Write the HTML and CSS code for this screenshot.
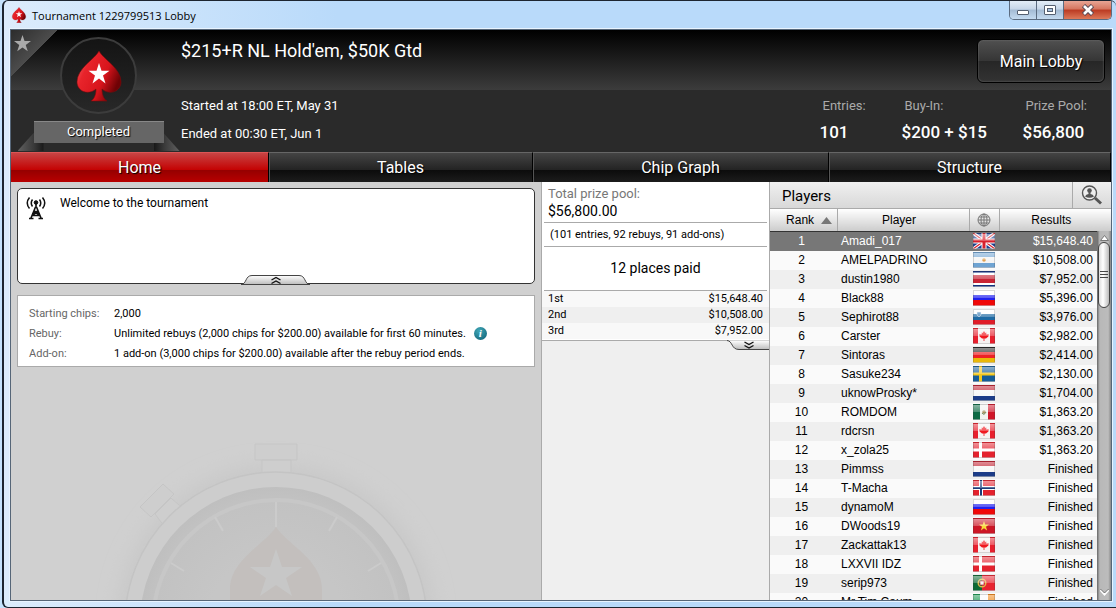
FILE: index.html
```html
<!DOCTYPE html>
<html lang="en">
<head>
    <meta charset="UTF-8">
    <meta name="viewport" content="width=device-width, initial-scale=1.0">
    <title>Tournament 1229799513 Lobby</title>
    <link rel="stylesheet" href="styles.css">
</head>
<body>
    <!-- Shared shapes: logo, star and flags -->
    <svg class="defs" width="0" height="0" aria-hidden="true">
        <defs>
            <linearGradient id="spadeFill" x1="0" y1="0" x2="1" y2="0.5">
                <stop offset="0" stop-color="#f8787a"/>
                <stop offset="0.3" stop-color="#e8242b"/>
                <stop offset="0.7" stop-color="#d8141c"/>
                <stop offset="1" stop-color="#6e0205"/>
            </linearGradient>
            <symbol id="star" viewBox="0 0 20 20">
                <path d="M10 0 L12.4 7.2 H20 L13.8 11.8 L16.2 19.2 L10 14.7 L3.8 19.2 L6.2 11.8 L0 7.2 H7.6 Z"/>
            </symbol>
            <symbol id="spade" viewBox="0 0 46 52">
                <path fill="url(#spadeFill)" stroke="#7a0a0c" stroke-width="0.6" d="M23 1 C27 9 45 18 45 32 C45 41 34 46 26 39 C26 45 28 49 31 51 H15 C18 49 20 45 20 39 C12 46 1 41 1 32 C1 18 19 9 23 1 Z"/>
                <path fill="#fff" d="M23 13 L25.5 20.7 H33.5 L27 25.5 L29.5 33.5 L23 28.6 L16.5 33.5 L19 25.5 L12.5 20.7 H20.5 Z"/>
            </symbol>

            <symbol id="gb" viewBox="0 0 22 16">
                <rect width="22" height="16" fill="#1c3f8f"/>
                <path d="M0 0 L22 16 M22 0 L0 16" stroke="#fff" stroke-width="3.4"/>
                <path d="M0 0 L22 16 M22 0 L0 16" stroke="#d8202c" stroke-width="1.2"/>
                <path d="M11 0 V16 M0 8 H22" stroke="#fff" stroke-width="5"/>
                <path d="M11 0 V16 M0 8 H22" stroke="#d8202c" stroke-width="3"/>
            </symbol>
            <symbol id="ar" viewBox="0 0 22 16">
                <rect width="22" height="16" fill="#f4f4f4"/>
                <path fill="#6ea3d2" d="M0 0 H22 V5 H0 Z M0 11 H22 V16 H0 Z"/>
                <circle cx="11" cy="8" r="1.8" fill="#e0a050"/>
            </symbol>
            <symbol id="cr" viewBox="0 0 22 16">
                <rect width="22" height="16" fill="#12307f"/>
                <rect y="2" width="22" height="12" fill="#fff"/>
                <rect y="4" width="22" height="8" fill="#c92434"/>
            </symbol>
            <symbol id="ru" viewBox="0 0 22 16">
                <rect width="22" height="16" fill="#fff"/>
                <rect y="5" width="22" height="6" fill="#2020f0"/>
                <rect y="10" width="22" height="6" fill="#f00808"/>
            </symbol>
            <symbol id="si" viewBox="0 0 22 16">
                <rect width="22" height="16" fill="#fff"/>
                <rect y="5" width="22" height="6" fill="#1e6aa4"/>
                <rect y="11" width="22" height="5" fill="#e01c28"/>
                <path d="M4 3 H8 V6 L6 8 L4 6 Z" fill="#3a7cb4" stroke="#e8eef4" stroke-width="0.5"/>
            </symbol>
            <symbol id="ca" viewBox="0 0 22 16">
                <rect width="22" height="16" fill="#f6f2f2"/>
                <path fill="#e8202e" d="M0 0 H5 V16 H0 Z M17 0 H22 V16 H17 Z"/>
                <path fill="#f01820" d="M11 3 L12.4 5 L13.4 4.6 L13.2 6.6 L15.8 6.2 L15.4 8.4 L13 10.6 H11.4 V13 H10.6 V10.6 H9 L6.6 8.4 L6.2 6.2 L8.8 6.6 L8.6 4.6 L9.6 5 Z"/>
            </symbol>
            <symbol id="de" viewBox="0 0 22 16">
                <rect width="22" height="16" fill="#222"/>
                <rect y="5" width="22" height="6" fill="#ee2024"/>
                <rect y="11" width="22" height="5" fill="#eab808"/>
            </symbol>
            <symbol id="se" viewBox="0 0 22 16">
                <rect width="22" height="16" fill="#145c98"/>
                <path d="M7.5 0 V16 M0 8 H22" stroke="#f4c81c" stroke-width="3"/>
            </symbol>
            <symbol id="nl" viewBox="0 0 22 16">
                <rect width="22" height="16" fill="#f8f8f8"/>
                <rect width="22" height="5" fill="#c01c2c"/>
                <rect y="11" width="22" height="5" fill="#1c3c88"/>
            </symbol>
            <symbol id="mx" viewBox="0 0 22 16">
                <rect width="22" height="16" fill="#f2f2f0"/>
                <rect width="7" height="16" fill="#0c6a44"/>
                <rect x="15" width="7" height="16" fill="#d01428"/>
                <circle cx="11" cy="8" r="1.8" fill="#a89060"/>
                <path d="M9 9 Q11 12 13 8" fill="none" stroke="#7c9068"/>
            </symbol>
            <symbol id="dk" viewBox="0 0 22 16">
                <rect width="22" height="16" fill="#e4222e"/>
                <path d="M7.5 0 V16 M0 8 H22" stroke="#fff" stroke-width="3"/>
            </symbol>
            <symbol id="no" viewBox="0 0 22 16">
                <rect width="22" height="16" fill="#e4222e"/>
                <path d="M8 0 V16 M0 8 H22" stroke="#fff" stroke-width="4"/>
                <path d="M8 0 V16 M0 8 H22" stroke="#1c3c78" stroke-width="2"/>
            </symbol>
            <symbol id="vn" viewBox="0 0 22 16">
                <rect width="22" height="16" fill="#cc1626"/>
                <path fill="#fad838" d="M11 3 L12.2 6.6 H16 L13 8.8 L14.1 12.4 L11 10.2 L7.9 12.4 L9 8.8 L6 6.6 H9.8 Z"/>
            </symbol>
            <symbol id="pt" viewBox="0 0 22 16">
                <rect width="22" height="16" fill="#e82430"/>
                <rect width="9" height="16" fill="#0c6a34"/>
                <circle cx="9" cy="8" r="3.8" fill="none" stroke="#e0b848" stroke-width="1.4"/>
                <rect x="7" y="6" width="4" height="4" fill="#f4f4f4" stroke="#c84048" stroke-width="0.8"/>
            </symbol>
            <symbol id="ie" viewBox="0 0 22 16">
                <rect width="22" height="16" fill="#fafafa"/>
                <rect width="7" height="16" fill="#189850"/>
                <rect x="15" width="7" height="16" fill="#f08818"/>
            </symbol>
        </defs>
    </svg>

    <div class="window">
        <div class="titlebar">
            <svg class="app-icon"><use href="#spade"/></svg>
            <span class="window-title">Tournament 1229799513 Lobby</span>
            <div class="window-buttons">
                <button class="win-btn" aria-label="Minimize">
                    <svg width="14" height="12"><rect x="1.5" y="6.5" width="11" height="4" rx="0.5" fill="#fff" stroke="#555f70"/></svg>
                </button>
                <button class="win-btn" aria-label="Maximize">
                    <svg width="14" height="12"><rect x="1.5" y="1.5" width="11" height="9" rx="0.5" fill="#fff" stroke="#555f70"/><rect x="4.5" y="4.5" width="5" height="3" fill="#a9c3e0" stroke="#555f70"/></svg>
                </button>
                <button class="win-btn close" aria-label="Close">
                    <svg width="14" height="12"><path d="M2.5 1.5 L11.5 10.5 M11.5 1.5 L2.5 10.5" stroke="#5a4a55" stroke-width="4.6"/><path d="M3 2 L11 10 M11 2 L3 10" stroke="#fff" stroke-width="2.6"/></svg>
                </button>
            </div>
        </div>

        <div class="client">
            <header class="header">
                <button class="favorite" aria-label="Favorite"><svg width="17" height="17"><use href="#star"/></svg></button>
                <div class="badge">
                    <div class="logo"><svg width="46" height="52"><use href="#spade"/></svg></div>
                    <div class="ribbon">Completed</div>
                </div>
                <div class="info">
                    <h1>$215+R NL Hold'em, $50K Gtd</h1>
                    <p>Started at 18:00 ET, May 31</p>
                    <p>Ended at 00:30 ET, Jun 1</p>
                </div>
                <div class="summary">
                    <button class="lobby-btn">Main Lobby</button>
                    <dl class="stats">
                        <div><dt>Entries:</dt><dd>101</dd></div>
                        <div><dt>Buy-In:</dt><dd>$200 + $15</dd></div>
                        <div><dt>Prize Pool:</dt><dd>$56,800</dd></div>
                    </dl>
                </div>
            </header>

            <nav class="tabs">
                <a href="#home" class="active">Home</a>
                <a href="#tables">Tables</a>
                <a href="#chips">Chip Graph</a>
                <a href="#structure">Structure</a>
            </nav>

            <main class="content">
                <section class="home">
                    <div class="welcome">
                        <svg class="antenna" width="20" height="24" fill="none" stroke="#111">
                            <path stroke-width="1.5" d="M6.5 3.5 Q4 7 6.5 10.5 M13.5 3.5 Q16 7 13.5 10.5 M3.5 1.5 Q-1 7 3.5 12.5 M16.5 1.5 Q21 7 16.5 12.5"/>
                            <path stroke-width="1.6" d="M10 7 V12 M9.5 11 L5 22 M10.5 11 L15 22 M7.5 15.5 H12.5 M6.500 19 L12 15.5 M13.500 19 L8 15.5 M5.5 19.5 H14.5 M3 22.5 H7.5 M12.5 22.5 H17"/>
                            <circle cx="10" cy="6.5" r="1.8" fill="#111"/>
                        </svg>
                        <p>Welcome to the tournament</p>
                        <button class="collapse" aria-label="Collapse">
                            <svg width="70" height="12">
                                <defs><linearGradient id="tabFill" x2="0" y2="1"><stop stop-color="#fff"/><stop offset="1" stop-color="#bcbcbc"/></linearGradient></defs>
                                <path fill="url(#tabFill)" stroke="#444" d="M0 10.5 C6 10 4 1.5 11 1.5 H58 C65 1.5 63 10 69 10.5 Z"/>
                                <path fill="none" stroke="#111" stroke-width="1.4" d="M30.5 6 L35 3.5 L39.5 6 M30.5 9.5 L35 7 L39.5 9.5"/>
                            </svg>
                        </button>
                    </div>
                    <dl class="rules">
                        <dt>Starting chips:</dt><dd>2,000</dd>
                        <dt>Rebuy:</dt>
                        <dd>Unlimited rebuys (2,000 chips for $200.00) available for first 60 minutes.
                            <button class="info-btn" aria-label="Rebuy info">i</button></dd>
                        <dt>Add-on:</dt><dd>1 add-on (3,000 chips for $200.00) available after the rebuy period ends.</dd>
                    </dl>
                    <svg class="stopwatch" viewBox="0 0 340 174" aria-hidden="true">
                        <defs>
                            <filter id="soft" x="-20%" y="-20%" width="140%" height="140%"><feGaussianBlur stdDeviation="10"/></filter>
                            <filter id="edge"><feGaussianBlur stdDeviation="0.7"/></filter>
                            <radialGradient id="face"><stop offset="0.5" stop-color="#c6c6c6"/><stop offset="0.9" stop-color="#c2c2c2"/><stop offset="1" stop-color="#bfbfbf"/></radialGradient>
                        </defs>
                        <circle cx="171" cy="197" r="158" fill="#c8c8c8" filter="url(#soft)"/>
                        <g filter="url(#edge)">
                            <g fill="#cecece" stroke="#c5c5c5">
                                <path d="M157 34 H186 V50 H157 Z M150 18 H192 V34 H150 Z"/>
                                <path d="M50 88 L66 72 L82 86 L62 104 Z M35 81 L58 58 L69 68 L46 91 Z"/>
                            </g>
                            <circle cx="171" cy="197" r="151" fill="#cdcdcd" stroke="#c4c4c4" stroke-width="1.5"/>
                            <circle cx="171" cy="197" r="136" fill="url(#face)"/>
                            <circle cx="171" cy="197" r="123" fill="none" stroke="#c7c7c7" stroke-width="4"/>
                        </g>
                        <path stroke="#cbcbcb" stroke-width="2" d="M171 76 V101 M110 91 L118 105 M232 91 L224 105 M66 137 L79 145 M276 137 L263 145"/>
                        <path fill="#c3bfbd" d="M171 101 C182 118 217 134 217 163 V174 H125 V163 C125 134 160 118 171 101 Z"/>
                        <path fill="#c7c7c7" d="M171 123 L177 141 H197 L181 152 L187 170 L171 159 L155 170 L161 152 L145 141 H165 Z"/>
                    </svg>
                </section>

                <section class="prizes">
                    <div class="prize-box">
                        <div class="pool">
                            <p class="pool-label">Total prize pool:</p>
                            <p class="pool-total">$56,800.00</p>
                        </div>
                        <p class="pool-detail">(101 entries, 92 rebuys, 91 add-ons)</p>
                        <p class="paid">12 places paid</p>
                        <table class="payouts">
                            <tr><th scope="row">1st</th><td>$15,648.40</td></tr>
                            <tr><th scope="row">2nd</th><td>$10,508.00</td></tr>
                            <tr><th scope="row">3rd</th><td>$7,952.00</td></tr>
                        </table>
                        <button class="expand" aria-label="Expand">
                            <svg width="42" height="11">
                                <path fill="url(#tabFill)" stroke="#444" d="M0 0.5 C6 1 4 9.5 12 9.5 H43 V0.5"/>
                                <path fill="none" stroke="#111" stroke-width="1.4" d="M17.5 2 L22 4.5 L26.5 2 M17.5 5.5 L22 8 L26.5 5.5"/>
                            </svg>
                        </button>
                    </div>
                </section>

                <section class="players">
                    <div class="players-head">
                        <h2>Players</h2>
                        <button class="search" aria-label="Find player">
                            <svg width="22" height="20">
                                <circle cx="8.5" cy="8" r="7" fill="#eee" stroke="#555" stroke-width="1.4"/>
                                <circle cx="8.5" cy="5.5" r="2.3" fill="#555"/>
                                <path fill="#555" d="M4 11.5 Q5 9 7.5 9 V7 H9.5 V9 Q12 9 13 11.5 Q8.5 14 4 11.5 Z"/>
                                <path stroke="#555" stroke-width="3" d="M14 13 L20 18.5"/>
                            </svg>
                        </button>
                    </div>
                    <div class="list">
                        <table class="ranking">
                            <thead>
                                <tr>
                                    <th class="rank">Rank <svg class="sort" width="11" height="7"><path fill="#777" d="M5.5 0 L11 7 H0 Z"/></svg></th>
                                    <th class="name">Player</th>
                                    <th class="country" aria-label="Country"><svg width="14" height="14" fill="none" stroke="#777"><circle cx="7" cy="7" r="6"/><ellipse cx="7" cy="7" rx="3" ry="6"/><path d="M7 1 V13 M1 7 H13 M2 4 H12 M2 10 H12"/></svg></th>
                                    <th class="result">Results</th>
                                </tr>
                            </thead>
                            <tbody>
                                <tr class="selected"><td>1</td><td>Amadi_017</td><td><span class="flag"><svg><use href="#gb"/></svg></span></td><td>$15,648.40</td></tr>
                                <tr><td>2</td><td>AMELPADRINO</td><td><span class="flag"><svg><use href="#ar"/></svg></span></td><td>$10,508.00</td></tr>
                                <tr><td>3</td><td>dustin1980</td><td><span class="flag"><svg><use href="#cr"/></svg></span></td><td>$7,952.00</td></tr>
                                <tr><td>4</td><td>Black88</td><td><span class="flag"><svg><use href="#ru"/></svg></span></td><td>$5,396.00</td></tr>
                                <tr><td>5</td><td>Sephirot88</td><td><span class="flag"><svg><use href="#si"/></svg></span></td><td>$3,976.00</td></tr>
                                <tr><td>6</td><td>Carster</td><td><span class="flag"><svg><use href="#ca"/></svg></span></td><td>$2,982.00</td></tr>
                                <tr><td>7</td><td>Sintoras</td><td><span class="flag"><svg><use href="#de"/></svg></span></td><td>$2,414.00</td></tr>
                                <tr><td>8</td><td>Sasuke234</td><td><span class="flag"><svg><use href="#se"/></svg></span></td><td>$2,130.00</td></tr>
                                <tr><td>9</td><td>uknowProsky*</td><td><span class="flag"><svg><use href="#nl"/></svg></span></td><td>$1,704.00</td></tr>
                                <tr><td>10</td><td>ROMDOM</td><td><span class="flag"><svg><use href="#mx"/></svg></span></td><td>$1,363.20</td></tr>
                                <tr><td>11</td><td>rdcrsn</td><td><span class="flag"><svg><use href="#ca"/></svg></span></td><td>$1,363.20</td></tr>
                                <tr><td>12</td><td>x_zola25</td><td><span class="flag"><svg><use href="#dk"/></svg></span></td><td>$1,363.20</td></tr>
                                <tr><td>13</td><td>Pimmss</td><td><span class="flag"><svg><use href="#nl"/></svg></span></td><td>Finished</td></tr>
                                <tr><td>14</td><td>T-Macha</td><td><span class="flag"><svg><use href="#no"/></svg></span></td><td>Finished</td></tr>
                                <tr><td>15</td><td>dynamoM</td><td><span class="flag"><svg><use href="#ru"/></svg></span></td><td>Finished</td></tr>
                                <tr><td>16</td><td>DWoods19</td><td><span class="flag"><svg><use href="#vn"/></svg></span></td><td>Finished</td></tr>
                                <tr><td>17</td><td>Zackattak13</td><td><span class="flag"><svg><use href="#ca"/></svg></span></td><td>Finished</td></tr>
                                <tr><td>18</td><td>LXXVII IDZ</td><td><span class="flag"><svg><use href="#dk"/></svg></span></td><td>Finished</td></tr>
                                <tr><td>19</td><td>serip973</td><td><span class="flag"><svg><use href="#pt"/></svg></span></td><td>Finished</td></tr>
                                <tr><td>20</td><td>Mr.Tim.Caum</td><td><span class="flag"><svg><use href="#ie"/></svg></span></td><td>Finished</td></tr>
                            </tbody>
                        </table>
                        <div class="scrollbar">
                            <svg class="arrow" width="9" height="7"><path fill="#fff" stroke="#777" d="M4.5 0.5 L8.5 5.5 H0.5 Z"/></svg>
                            <div class="thumb"></div>
                            <svg class="arrow down" width="9" height="7"><path fill="none" stroke="#fff" stroke-width="2" d="M0.5 1 L4.5 5.5 L8.5 1"/><path fill="none" stroke="#666" d="M0.5 0 L4.5 4 L8.5 0"/></svg>
                        </div>
                    </div>
                </section>
            </main>
        </div>
    </div>
</body>
</html>
```

FILE: styles.css
```css
* {
    box-sizing: border-box;
}
body {
    margin: 0;
    padding-left: 2px;
    background: #c5e2fc;
    font-family: Roboto, "Liberation Sans", sans-serif;
    font-size: 12px;
    color: #000;
}
h1, h2, p, dl, dd {
    margin: 0;
    font-weight: normal;
}
button {
    padding: 0;
    border: none;
    background: none;
    font-family: inherit;
    cursor: pointer;
}
svg {
    display: block;
}
.defs {
    position: absolute;
}

/* Window frame */
.window {
    display: flex;
    flex-direction: column;
    height: 100vh;
    padding: 0 4px 6px 6px;
    background: linear-gradient(90deg, #dcecfc, #b9dafa 30%, #b9dafa);
    border: 2px solid #1d2530;
    border-width: 1px 0 1px 2px;
    border-radius: 6px 6px 0 6px;
}
.titlebar {
    display: flex;
    align-items: center;
    height: 28px;
    gap: 5px;
    padding-left: 1px;
}
.app-icon {
    width: 16px;
    height: 16px;
}
.window-title {
    flex: 1;
    font-family: "Open Sans", sans-serif;
    font-size: 11px;
}
.window-buttons {
    display: flex;
    align-self: flex-start;
    height: 19px;
    border: 1px solid #5b6b80;
    border-top: none;
    border-radius: 0 0 5px 5px;
    overflow: hidden;
}
.win-btn {
    display: flex;
    align-items: center;
    justify-content: center;
    width: 27px;
    border-right: 1px solid #5b6b80;
    background: linear-gradient(#e3edf7, #c6d6e8 45%, #a4bbd4 50%, #c4daf0);
}
.close {
    width: 47px;
    border-right: none;
    background: linear-gradient(#e8a594, #d5755f 45%, #bb3a22 50%, #dd7858);
}
.client {
    flex: 1;
    min-height: 0;
    display: flex;
    flex-direction: column;
    border: 1px solid #566678;
    box-shadow: 0 0 0 1px #e8f4ff;
}

/* Header */
.header {
    position: relative;
    display: flex;
    height: 122px;
    background: linear-gradient(#000, #3c3c3c) top / 100% 60px no-repeat #2a2a2a;
    color: #fff;
}
.favorite {
    position: absolute;
    z-index: 1;
    top: 0;
    left: 0;
    display: flex;
    align-items: flex-start;
    width: 46px;
    height: 46px;
    padding: 5px 3px;
    background: linear-gradient(135deg, #2c2c2c, #4c4c4c 50%, transparent 50%);
    fill: #aaa;
}
.badge {
    position: relative;
    z-index: 0;
    display: flex;
    flex-direction: column;
    align-items: center;
    width: 170px;
    padding: 7px 0 0 5px;
}
.logo {
    display: flex;
    align-items: center;
    justify-content: center;
    width: 77px;
    height: 77px;
    border: 2px solid #3c3c3c;
    border-radius: 50%;
    background: linear-gradient(#141414, #282828);
}
.ribbon {
    position: relative;
    width: 130px;
    margin-top: 7px;
    padding-bottom: 1px;
    background: #666;
    border-top: 1px solid #888;
    line-height: 20px;
    font-size: 13px;
    text-align: center;
    text-shadow: 1px 1px 1px #000;
}
.ribbon::before, .ribbon::after {
    content: "";
    position: absolute;
    top: 11px;
    width: 26px;
    height: 18px;
    background: linear-gradient(90deg, #606060, #3a3a3a 60%, #181818);
    z-index: -1;
}
.ribbon::before {
    left: -16px;
    clip-path: polygon(16px 0, 100% 10px, 100% 100%, 0 100%);
}
.ribbon::after {
    right: -16px;
    background: linear-gradient(270deg, #606060, #3a3a3a 60%, #181818);
    clip-path: polygon(0 10px, 10px 0, 100% 100%, 0 100%);
}
.info {
    flex: 1;
}
.info h1 {
    padding: 9px 0;
    margin-bottom: 20px;
    font-size: 18px;
    line-height: 24px;
}
.info p {
    font-size: 13px;
    line-height: 28px;
}
.summary {
    display: flex;
    flex-direction: column;
    align-items: flex-end;
    padding: 9px 6px 0 0;
}
.lobby-btn {
    width: 128px;
    height: 44px;
    border: 1px solid #000;
    border-radius: 6px;
    background: linear-gradient(#505050, #363636 49%, #262626 50%, #333);
    box-shadow: inset 0 0 2px #777;
    color: #fff;
    font-size: 16px;
    text-shadow: 1px 1px 1px #000;
}
.stats {
    display: grid;
    grid-template-columns: 82px 121px auto;
    padding: 11px 18px 0 0;
}
.stats dt {
    padding-left: 3px;
    color: #aaa;
    font-size: 13px;
    line-height: 24px;
}
.stats dd {
    font-size: 17px;
    font-weight: 500;
    line-height: 28px;
}

/* Tabs */
.tabs {
    display: grid;
    grid-template-columns: 258fr 264fr 296fr 282fr;
    height: 30px;
    background: #000;
}
.tabs a {
    border-top: 1px solid #666;
    border-right: 1px solid #000;
    box-shadow: inset 1px 0 #555;
    background: linear-gradient(#444, #222 60%, #0c0c0c 60%, #1c1c1c);
    color: #fff;
    font-size: 16px;
    line-height: 29px;
    text-align: center;
    text-decoration: none;
    text-shadow: 1px 1px 1px #000;
}
.tabs .active {
    border-top-color: #d55;
    box-shadow: none;
    background: linear-gradient(#c84444, #c40000 60%, #960000 60%, #b80000);
}

/* Columns */
.content {
    flex: 1;
    min-height: 0;
    display: grid;
    grid-template-columns: 1fr 229px 341px;
    grid-template-rows: 100%;
}
.home {
    position: relative;
    padding: 6px;
    background: #d0d0d0;
    overflow: hidden;
}
.welcome {
    position: relative;
    display: flex;
    gap: 14px;
    height: 96px;
    padding: 7px 8px;
    border: 1px solid #333;
    border-radius: 5px;
    background: #fff;
}
.welcome p {
    line-height: 14px;
}
.collapse {
    position: absolute;
    left: 50%;
    bottom: -3px;
    margin-left: -35px;
}
.rules {
    position: relative;
    z-index: 1;
    display: grid;
    grid-template-columns: 85px 1fr;
    margin-top: 11px;
    padding: 8px 11px 2px;
    border: 1px solid #aaa;
    background: #fff;
    font-size: 11px;
    line-height: 20px;
}
.rules dt {
    color: #666;
}
.info-btn {
    width: 13px;
    height: 13px;
    margin-left: 5px;
    border-radius: 50%;
    background: radial-gradient(circle at 40% 30%, #40a8b8, #0c5c70);
    color: #fff;
    font: italic bold 11px/13px "Liberation Serif", serif;
    text-align: center;
}
.stopwatch {
    position: absolute;
    bottom: 0;
    left: 94px;
    width: 340px;
    overflow: visible;
}

/* Prize pool */
.prizes {
    background: #efefef;
    border: 1px solid #aaa;
    border-width: 0 1px;
}
.prize-box {
    position: relative;
    background: #fff;
    border-bottom: 1px solid #aaa;
}
.pool {
    margin: 0 2px;
    padding: 4px 4px 2px;
    border-bottom: 1px solid #aaa;
}
.pool-label {
    color: #777;
    font-size: 13px;
    line-height: 16px;
}
.pool-total {
    font-size: 14px;
    line-height: 18px;
}
.pool-detail {
    margin: 0 2px;
    padding: 0 6px;
    border-bottom: 1px solid #aaa;
    font-size: 11px;
    line-height: 23px;
}
.paid {
    margin: 0 2px;
    border-bottom: 1px solid #aaa;
    font-size: 14px;
    line-height: 43px;
    text-align: center;
}
.payouts {
    width: 100%;
    border-collapse: collapse;
    font-size: 11px;
    line-height: 16px;
    margin-bottom: 1px;
}
.payouts tr {
    background: #f8f8f8;
}
.payouts tr:nth-child(even) {
    background: #efefef;
}
.payouts th {
    padding: 0 6px;
    font-weight: normal;
    text-align: left;
}
.payouts td {
    padding: 0 6px;
    text-align: right;
}
.expand {
    position: absolute;
    right: 0;
    top: 100%;
}

/* Players */
.players {
    display: flex;
    flex-direction: column;
    min-width: 0;
}
.players-head {
    display: flex;
    height: 27px;
    flex: none;
    background: linear-gradient(#f0f0f0, #d8d8d8);
    border-bottom: 1px solid #aaa;
}
.players-head h2 {
    flex: 1;
    padding-left: 12px;
    font-size: 15px;
    line-height: 28px;
}
.search {
    display: flex;
    align-items: center;
    justify-content: center;
    width: 39px;
    border-left: 1px solid #aaa;
}
.list {
    position: relative;
    flex: 1;
    min-height: 0;
    overflow: hidden;
    font-family: "Liberation Sans", Arial, sans-serif;
}
.ranking {
    width: 100%;
    table-layout: fixed;
    border-collapse: collapse;
}
.ranking th {
    height: 22px;
    padding: 0;
    background: linear-gradient(#fff, #ccc);
    border-right: 1px solid #aaa;
    border-bottom: 1px solid #333;
    font-weight: normal;
}
.ranking th svg {
    display: inline-block;
    vertical-align: middle;
}
.ranking th:last-child {
    border-right: none;
    padding-right: 8px;
}
.ranking .rank {
    width: 67px;
    padding-left: 12px;
}
.ranking .name {
    width: 132px;
    padding-right: 8px;
}
.sort {
    margin-left: 4px;
}
.country {
    width: 30px;
}
.ranking td {
    height: 19px;
    padding: 0 4px;
    line-height: 19px;
}
.ranking tbody tr {
    background: #fafafa;
}
.ranking tbody tr:nth-child(odd) {
    background: #efefef;
}
.ranking tbody .selected {
    background: #777 !important;
    color: #fff;
}
.ranking td:first-child {
    padding-right: 8px;
    text-align: center;
}
.ranking td:last-child {
    padding-right: 18px;
    text-align: right;
}
.flag {
    position: relative;
    display: block;
    width: 22px;
    height: 16px;
}
.flag svg {
    width: 22px;
    height: 16px;
}
.flag::after {
    content: "";
    position: absolute;
    inset: 0;
    border: 1px solid rgba(60, 60, 60, 0.2);
    background: linear-gradient(rgba(255, 255, 255, 0.5), rgba(255, 255, 255, 0.25) 50%, transparent 50%);
}
.scrollbar {
    position: absolute;
    top: 22px;
    right: 0;
    bottom: 0;
    width: 14px;
    display: flex;
    flex-direction: column;
    align-items: center;
    padding: 4px 0;
    background: linear-gradient(90deg, #666, #b8b8b8 20%, #bcbcbc 80%, #888);
}
.thumb {
    width: 12px;
    height: 66px;
    border: 1px solid #444;
    border-radius: 6px;
    background:
        repeating-linear-gradient(#444 0 1px, transparent 1px 3px) center / 8px 9px no-repeat,
        linear-gradient(90deg, #ddd, #fff 40%, #bbb);
}
.down {
    margin-top: auto;
}
```
